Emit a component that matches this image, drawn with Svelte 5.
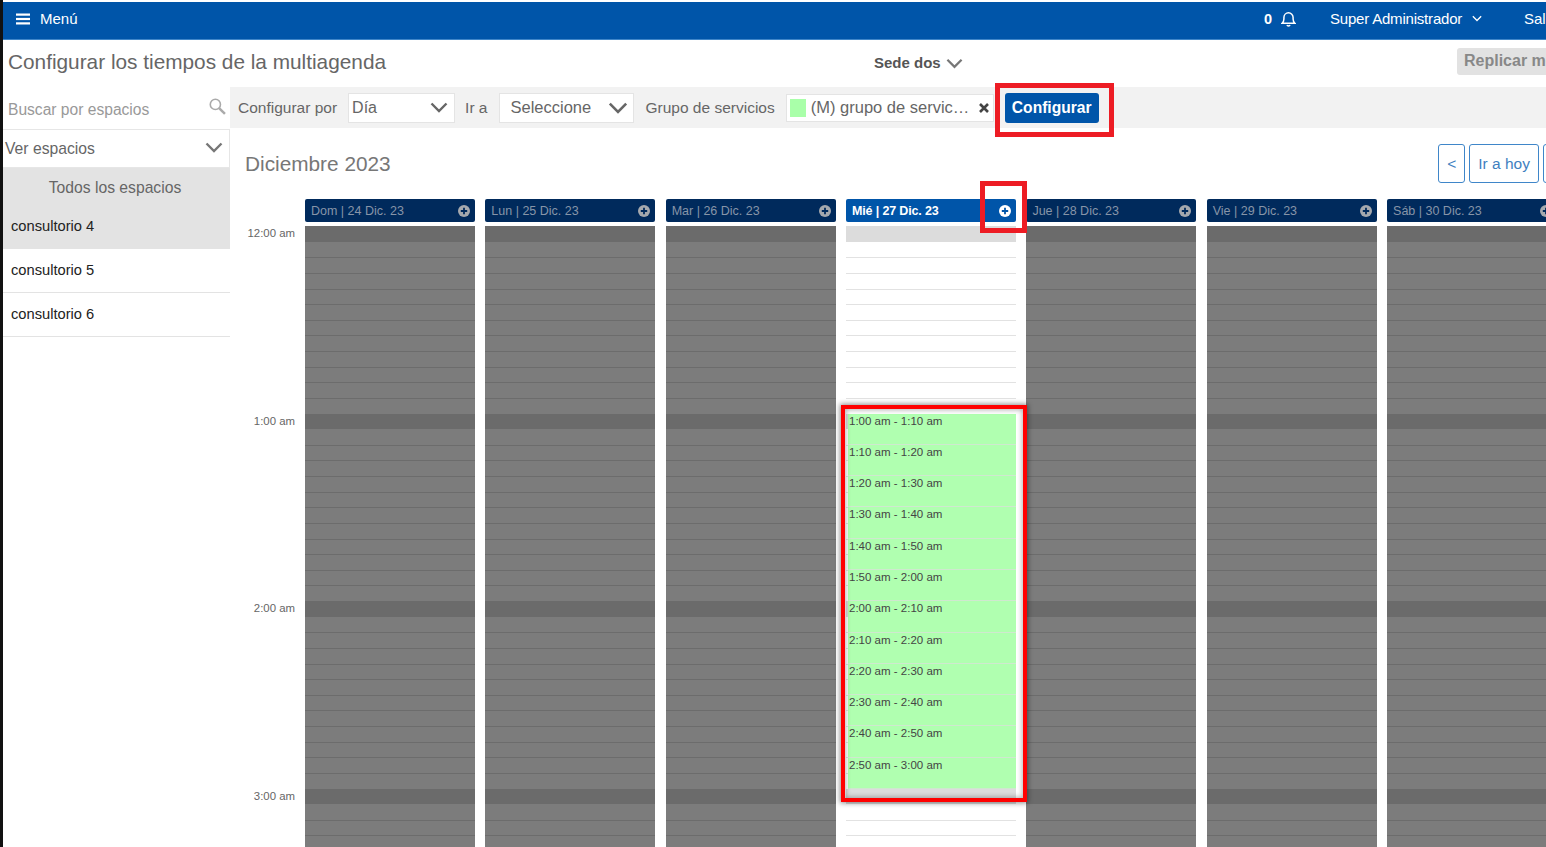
<script lang="ts">
  const slotCount = 40

  const days = [
    { label: 'Dom | 24 Dic. 23' },
    { label: 'Lun | 25 Dic. 23' },
    { label: 'Mar | 26 Dic. 23' },
    { label: 'Mié | 27 Dic. 23', active: true },
    { label: 'Jue | 28 Dic. 23' },
    { label: 'Vie | 29 Dic. 23' },
    { label: 'Sáb | 30 Dic. 23' }
  ]

  const hours = ['12:00 am', '1:00 am', '2:00 am', '3:00 am']

  const events = [
    '1:00 am - 1:10 am',
    '1:10 am - 1:20 am',
    '1:20 am - 1:30 am',
    '1:30 am - 1:40 am',
    '1:40 am - 1:50 am',
    '1:50 am - 2:00 am',
    '2:00 am - 2:10 am',
    '2:10 am - 2:20 am',
    '2:20 am - 2:30 am',
    '2:30 am - 2:40 am',
    '2:40 am - 2:50 am',
    '2:50 am - 3:00 am'
  ]

  const spaces = ['consultorio 4', 'consultorio 5', 'consultorio 6']
</script>

{#snippet chevron(cls)}
  <svg class={cls} viewBox="0 0 18 11" fill="none" stroke="currentColor" stroke-width="2.4">
    <path d="M1.5 1.5 9 9l7.5-7.5" />
  </svg>
{/snippet}

{#snippet plus(cls)}
  <svg class="plus {cls}" viewBox="0 0 12 12">
    <circle cx="6" cy="6" r="6" fill="currentColor" />
    <path d="M6 2.8v6.4M2.8 6h6.4" stroke="var(--plus-bg)" stroke-width="1.8" />
  </svg>
{/snippet}

<div class="page">
  <header class="topbar">
    <div class="menu">
      <svg class="burger" viewBox="0 0 14 12" fill="currentColor">
        <rect width="14" height="2.2" y="0.5" />
        <rect width="14" height="2.2" y="4.9" />
        <rect width="14" height="2.2" y="9.3" />
      </svg>
      <span>Menú</span>
    </div>
    <div class="notif">
      <span>0</span>
      <svg class="bell" viewBox="0 0 14 15" fill="none" stroke="currentColor" stroke-width="1.4">
        <path d="M1 11.5c1.2-1 1.7-2 1.7-4V6a4.3 4.3 0 0 1 8.6 0v1.5c0 2 .5 3 1.7 4z" />
        <path d="M5.6 13.2c.3 1 2.500 1 2.800 0" />
      </svg>
    </div>
    <div class="user">
      <span>Super Administrador</span>
      {@render chevron('user-chevron')}
    </div>
    <div class="logout">Salir</div>
  </header>

  <div class="titlerow">
    <h1>Configurar los tiempos de la multiagenda</h1>
    <div class="sede">
      <span>Sede dos</span>
      {@render chevron('sede-chevron')}
    </div>
    <button class="replicate">Replicar mes</button>
  </div>

  <div class="main">
    <aside class="sidebar">
      <div class="search">
        <span>Buscar por espacios</span>
        <svg class="search-icon" viewBox="0 0 16 16" fill="none" stroke="currentColor">
          <circle cx="6" cy="6" r="4.800" stroke-width="1.500" />
          <path d="m9.500 9.500 5.500 5.500" stroke-width="2.300" />
        </svg>
      </div>
      <div class="spaces-select">
        <span>Ver espacios</span>
        {@render chevron('spaces-chevron')}
      </div>
      <div class="all-spaces">Todos los espacios</div>
      {#each spaces as space, i}
        <div class="space" class:selected={i === 0}>{space}</div>
      {/each}
    </aside>

    <section class="content">
      <div class="toolbar">
        <span class="label first">Configurar por</span>
        <div class="select mode"><span>Día</span>{@render chevron('select-chevron')}</div>
        <span class="label">Ir a</span>
        <div class="select goto"><span>Seleccione</span>{@render chevron('select-chevron')}</div>
        <span class="label group-label">Grupo de servicios</span>
        <div class="select group">
          <i class="swatch"></i>
          <span>(M) grupo de servic…</span>
          <svg class="close" viewBox="0 0 10 10" stroke="currentColor" stroke-width="2.600">
            <path d="m1 1 8 8M9 1 1 9" />
          </svg>
        </div>
        <button class="configure">Configurar</button>
      </div>

      <div class="cal-head">
        <h2>Diciembre 2023</h2>
        <div class="nav">
          <button>&lt;</button>
          <button>Ir a hoy</button>
          <button>&gt;</button>
        </div>
      </div>

      <div class="calendar">
        <div class="gutter">
          {#each hours as hour}
            <div class="hour">{hour}</div>
          {/each}
        </div>
        <div class="columns">
          {#each days as day}
            <div class="day" class:active={day.active}>
              <div class="day-head">
                <span>{day.label}</span>
                {@render plus('')}
              </div>
              <div class="slots">
                {#each Array(slotCount) as _, n}
                  <div class="slot" class:on-hour={n % 12 === 0}></div>
                {/each}
                {#if day.active}
                  <div class="events">
                    {#each events as ev}
                      <div class="event">{ev}</div>
                    {/each}
                  </div>
                {/if}
              </div>
            </div>
          {/each}
        </div>
      </div>
    </section>
  </div>

  <!-- marcas rojas de la captura -->
  <div class="mark mark-configure"></div>
  <div class="mark mark-plus"></div>
  <div class="mark mark-events"></div>
</div>

<style>
  :global(body) {
    margin: 0;
    background: #fff;
  }

  .page {
    position: relative;
    width: 1546px;
    height: 847px;
    overflow: hidden;
    box-sizing: border-box;
    padding-top: 2px;
    border-left: 3px solid #111;
    font-family: "Liberation Sans", Arial, sans-serif;
    color: #666;
  }

  .topbar {
    display: flex;
    align-items: center;
    height: 33px;
    padding-bottom: 4px;
    background: #0055a9;
    border-bottom: 1px solid #3f86c9;
    color: #fff;
    font-size: 15px;
    white-space: nowrap;
  }

  .menu {
    flex: none;
    display: flex;
    align-items: center;
    gap: 10px;
    margin-left: 13px;
    width: 1248px;
  }

  .burger {
    width: 14px;
    height: 12px;
  }

  .notif {
    flex: none;
    display: flex;
    align-items: center;
    gap: 9px;
    width: 66px;
    font-weight: 700;
    font-size: 14.5px;
  }

  .bell {
    width: 15px;
    height: 16px;
  }

  .user {
    flex: none;
    display: flex;
    align-items: center;
    gap: 10px;
    width: 194px;
    letter-spacing: -0.2px;
  }

  .user-chevron {
    width: 10px;
    height: 7px;
  }

  .titlerow {
    display: grid;
    grid-template-columns: 871px 583px 1fr;
    align-items: center;
    height: 47px;
    white-space: nowrap;
  }

  h1 {
    margin: 0 0 3px 5px;
    font-size: 20.8px;
    font-weight: 400;
    color: #666;
  }

  .sede {
    display: flex;
    align-items: center;
    gap: 5px;
    margin-top: -2px;
    font-size: 15px;
    font-weight: 700;
    color: #555;
  }

  .sede-chevron {
    width: 17px;
    height: 11px;
    margin-top: 2px;
    color: #777;
  }

  .replicate {
    justify-self: start;
    margin-top: -5px;
    width: 130px;
    height: 27px;
    padding: 0 7px;
    text-align: left;
    border: none;
    border-radius: 3px;
    background: #e2e2e2;
    color: #888;
    font: 700 16px "Liberation Sans", Arial, sans-serif;
    white-space: nowrap;
    overflow: hidden;
  }

  .main {
    display: flex;
    height: 760px;
  }

  .sidebar {
    flex: none;
    width: 227px;
    background: #fff;
  }

  .search {
    display: flex;
    align-items: center;
    justify-content: space-between;
    height: 42px;
    padding: 4px 4px 0 5px;
    box-sizing: border-box;
    font-size: 15.6px;
    color: #999;
  }

  .search-icon {
    width: 17px;
    height: 17px;
    margin-top: -7px;
    color: #aaa;
  }

  .spaces-select {
    display: flex;
    align-items: center;
    justify-content: space-between;
    height: 39px;
    padding: 1px 6px 0 2px;
    box-sizing: border-box;
    border: solid #e6e6e6;
    border-width: 1px 1px 1px 0;
    font-size: 15.7px;
  }

  .spaces-chevron {
    width: 18px;
    height: 11px;
    margin-top: -4px;
    color: #777;
  }

  .all-spaces {
    height: 37px;
    line-height: 40px;
    text-align: center;
    font-size: 15.7px;
    background: #e3e3e3;
    padding-right: 3px;
  }

  .space {
    height: 43px;
    line-height: 42px;
    padding-left: 8px;
    border-bottom: 1px solid #e3e3e3;
    font-size: 14.7px;
    color: #222;
  }

  .space.selected {
    background: #e3e3e3;
  }

  .content {
    flex: 1;
    min-width: 0;
  }

  .toolbar {
    display: flex;
    align-items: center;
    height: 41px;
    background: #f2f2f2;
    white-space: nowrap;
    font-size: 15.5px;
  }

  .label {
    margin: 0 10px;
    color: #666;
  }

  .label.first {
    margin: 0 11px 0 8px;
  }

  .label.group-label {
    margin-left: 11px;
  }

  .select {
    display: flex;
    align-items: center;
    justify-content: space-between;
    height: 30px;
    box-sizing: border-box;
    background: #fff;
    border: 1px solid #e4e4e4;
    color: #666;
    font-size: 16.5px;
  }

  .mode {
    width: 107px;
    padding: 0 6px 0 3px;
    font-size: 16px;
  }

  .goto {
    width: 135px;
    margin-left: 2px;
    padding: 0 5px 0 10px;
  }

  .select-chevron {
    width: 18px;
    height: 11px;
    color: #666;
  }

  .goto .select-chevron {
    width: 20px;
    height: 12px;
  }

  .group {
    width: 208px;
    height: 28px;
    padding: 0 3px;
    margin-left: 1px;
    justify-content: flex-start;
  }

  .swatch {
    width: 16px;
    height: 18px;
    margin-right: 5px;
    background: #a9ffa9;
  }

  .group span {
    flex: 1;
  }

  .close {
    width: 10px;
    height: 10px;
    margin-right: 1px;
    margin-left: 4px;
    color: #444;
  }

  .configure {
    width: 94px;
    height: 30px;
    margin-left: 11px;
    padding: 1px 0 0;
    border: none;
    border-radius: 3px;
    background: #0055a9;
    color: #fff;
    font: 700 15.6px "Liberation Sans", Arial, sans-serif;
  }

  .cal-head {
    display: flex;
    align-items: center;
    justify-content: space-between;
    height: 71px;
    padding-left: 15px;
  }

  h2 {
    margin: 0;
    font-size: 20.8px;
    font-weight: 400;
    color: #777;
  }

  .nav {
    display: flex;
    gap: 4px;
    margin-right: -24px;
  }

  .nav button {
    height: 39px;
    padding: 0 8px;
    box-sizing: border-box;
    background: #fff;
    border: 1px solid #3f86c9;
    border-radius: 3px;
    color: #3f7fbf;
    font: 15.5px "Liberation Sans", Arial, sans-serif;
  }

  .calendar {
    display: flex;
    white-space: nowrap;
  }

  .gutter {
    flex: none;
    width: 75px;
    padding-top: 27px;
  }

  .hour {
    height: 187.6px;
    padding-right: 10px;
    text-align: right;
    font-size: 11.4px;
    line-height: 15px;
    color: #666;
  }

  .columns {
    display: grid;
    grid-template-columns: repeat(7, 170px);
    column-gap: 10.35px;
  }

  .day-head {
    --plus-bg: #002a5c;
    display: flex;
    align-items: center;
    justify-content: space-between;
    height: 23px;
    padding: 0 5px 0 6px;
    margin-bottom: 4px;
    border-radius: 2px;
    background: #002a5c;
    color: #8795a8;
    font-size: 12.5px;
  }

  .plus {
    width: 12px;
    height: 12px;
    color: #a5a9ae;
  }

  .slots {
    position: relative;
  }

  .slot {
    box-sizing: border-box;
    height: 15.64px;
    background: #7c7c7c;
    border-top: 1px solid #6c6c6c;
  }

  .slot.on-hour {
    background: #6b6b6b;
    border-top: none;
  }

  .slot.on-hour + .slot {
    border-top: none;
  }

  .active .day-head {
    --plus-bg: #0055a9;
    background: #0055a9;
    color: #fff;
    font-weight: 700;
    letter-spacing: -0.15px;
  }

  .active .plus {
    color: #fff;
  }

  .active .slot {
    background: #fff;
    border-top-color: #e2e2e2;
  }

  .active .slot.on-hour {
    background: #dcdcdc;
  }

  .events {
    position: absolute;
    top: 187.7px;
    left: 2px;
    right: 0;
  }

  .event {
    box-sizing: border-box;
    height: 31.28px;
    padding-left: 1px;
    background: #b0ffb0;
    border-bottom: 1px solid #cfe8cf;
    font-size: 11.5px;
    line-height: 14px;
    color: #444;
  }

  /* anotaciones rojas sobre la captura */
  .mark {
    position: absolute;
    box-sizing: border-box;
    border: 5px solid #ed1c24;
    pointer-events: none;
  }

  .mark-configure {
    left: 992px;
    top: 83px;
    width: 119px;
    height: 54px;
  }

  .mark-plus {
    left: 977px;
    top: 181px;
    width: 47px;
    height: 52px;
  }

  .mark-events {
    left: 838px;
    top: 405px;
    width: 186px;
    height: 397px;
    border: 4px solid #f00;
    box-shadow: 0 0 5px 1px rgba(0, 0, 0, 0.45), inset 0 0 5px 1px rgba(0, 0, 0, 0.3);
  }
</style>
